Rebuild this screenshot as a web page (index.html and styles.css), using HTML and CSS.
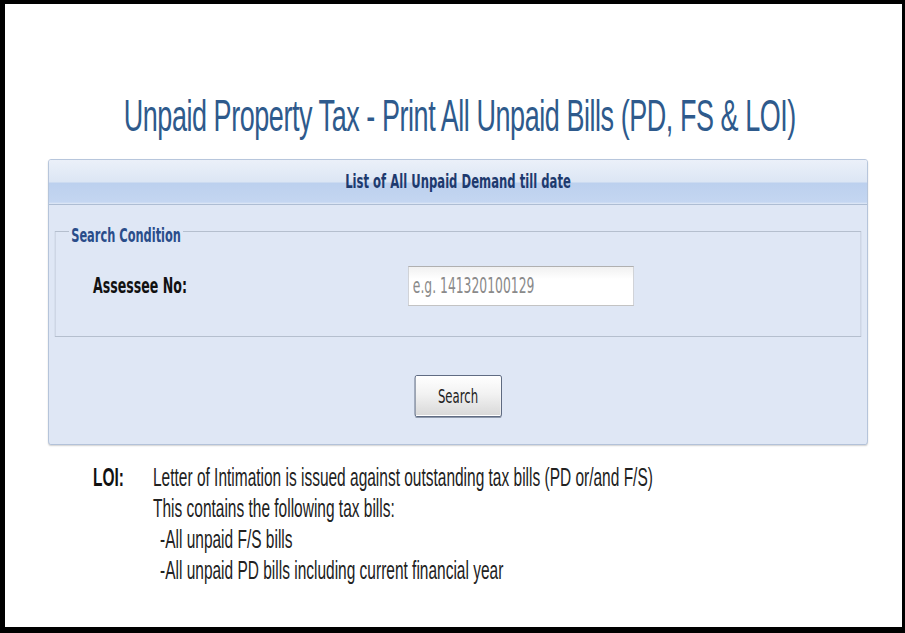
FILE: index.html
```html
<!DOCTYPE html>
<html lang="en">
<head>
<meta charset="utf-8">
<title>Unpaid Property Tax - Print All Unpaid Bills</title>
<link rel="stylesheet" href="styles.css">
</head>
<body>
<div class="frame">
  <div class="page">
    <div class="column">
      <h1 class="title">Unpaid Property Tax - Print All Unpaid Bills (PD, FS &amp; LOI)</h1>
      <section class="panel">
        <div class="panel-head">List of All Unpaid Demand till date</div>
        <div class="panel-body">
          <fieldset class="search">
            <legend>Search Condition</legend>
            <div class="row">
              <label for="ano">Assessee No:</label>
              <input id="ano" type="text" placeholder="e.g. 141320100129">
            </div>
          </fieldset>
          <div class="actions"><button type="button" class="btn">Search</button></div>
        </div>
      </section>
      <div class="loi">
        <div class="loi-key">LOI:</div>
        <div class="loi-text">
          <p>Letter of Intimation is issued against outstanding tax bills (PD or/and F/S)</p>
          <p>This contains the following tax bills:</p>
          <p class="sub">-All unpaid F/S bills</p>
          <p class="sub">-All unpaid PD bills including current financial year</p>
        </div>
      </div>
    </div>
  </div>
</div>
</body>
</html>
```

FILE: styles.css
```css
html, body {
  margin: 0;
  padding: 0;
  background: #ffffff;
}

.frame {
  width: 905px;
  height: 633px;
  box-sizing: border-box;
  border-style: solid;
  border-color: #000000;
  border-width: 4px 3px 6px 5px;
  overflow: hidden;
  background: #ffffff;
}

/* the reference is horizontally compressed; lay out wide, then squeeze */
.page {
  width: 1495px;
  padding-top: 86px;
  transform: scaleX(0.6);
  transform-origin: 0 0;
}

.column {
  margin-left: 71.7px;
  width: 1366.7px;
}

.title {
  margin: 0 0 18px;
  font-family: "Liberation Sans", Arial, sans-serif;
  font-weight: 400;
  font-size: 45px;
  line-height: 51px;
  letter-spacing: -0.75px;
  color: #2e5a8c;
  text-align: center;
  white-space: nowrap;
  padding-left: 6px;
}

.panel {
  border: 1px solid #a9bbd6;
  border-radius: 4px;
  background: #dfe7f5;
  box-shadow: 0 1px 2px rgba(0, 0, 0, 0.18);
}

.panel-head {
  height: 44px;
  line-height: 44px;
  text-align: center;
  font-family: "DejaVu Sans", Verdana, sans-serif;
  font-weight: bold;
  font-size: 19.4px;
  color: #1e3a6e;
  border-bottom: 1px solid #aebdd3;
  border-radius: 3px 3px 0 0;
  background: linear-gradient(to bottom,
    #ebf0f9 0px,
    #dce6f4 22px,
    #bcd0ee 23px,
    #c4d6f1 42px,
    #e2eaf6 44px);
}

.panel-body {
  padding: 11px 10.6px 27px;
}

.search {
  margin: 0;
  padding: 0;
  min-width: 0;
  border: 1px solid #b5bfce;
}

.search legend {
  margin-left: 23px;
  padding: 8px 3px 0;
  font-family: "DejaVu Sans", Verdana, sans-serif;
  font-weight: bold;
  font-size: 19px;
  line-height: 22px;
  color: #2a4d8a;
}

.row {
  display: grid;
  grid-template-columns: 525px 376.7px;
  align-items: center;
  padding: 20px 0 30px 62.4px;
}

.row label {
  font-family: "DejaVu Sans", Verdana, sans-serif;
  font-weight: bold;
  font-size: 21px;
  color: #111111;
}

.row input {
  box-sizing: border-box;
  width: 376.7px;
  height: 40px;
  margin: 0;
  padding: 0 0 0 7px;
  border: 1px solid #c3c3c3;
  border-top-color: #b0b0b0;
  background: linear-gradient(to bottom, #f1f1f1 0px, #ffffff 12px);
  font-family: "DejaVu Sans", Verdana, sans-serif;
  font-size: 20.6px;
  color: #333333;
  outline: none;
}

.row input::placeholder {
  color: #8a8a8a;
  opacity: 1;
}

.actions {
  display: flex;
  justify-content: center;
  margin-top: 38px;
}

.btn {
  box-sizing: border-box;
  width: 145px;
  height: 42px;
  padding: 0;
  border: 1px solid #3f4c66;
  border-radius: 3px;
  background: linear-gradient(to bottom, #ffffff 0%, #f2f2f2 45%, #d8d8d8 100%);
  box-shadow: inset 0 0 0 1px #ffffff, 0 1px 0 #8f9aac;
  font-family: "DejaVu Sans", Verdana, sans-serif;
  font-size: 19.5px;
  color: #222222;
}

.loi {
  display: flex;
  margin: 17px 0 0 75px;
  font-family: "Liberation Sans", Arial, sans-serif;
  font-size: 25.8px;
  line-height: 31px;
  color: #222222;
}

.loi-key {
  width: 100px;
  flex: none;
  font-weight: bold;
  color: #111111;
}

.loi-text p {
  margin: 0;
  white-space: nowrap;
}

.loi-text .sub {
  padding-left: 11.7px;
}
```
